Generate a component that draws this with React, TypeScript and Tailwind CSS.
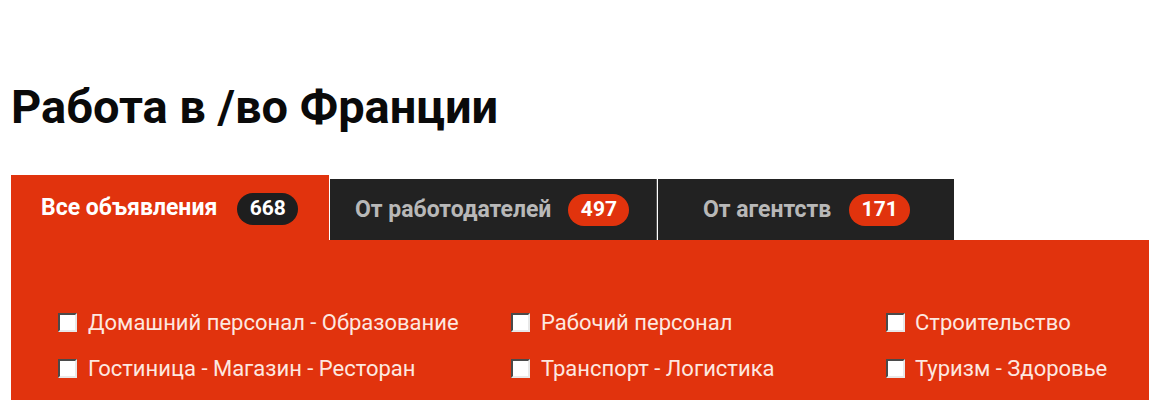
const tabs = [
  { label: "Все объявления", count: 668, active: true },
  { label: "От работодателей", count: 497, active: false },
  { label: "От агентств", count: 171, active: false },
];

const categories = [
  ["Домашний персонал - Образование", "Рабочий персонал", "Строительство"],
  ["Гостиница - Магазин - Ресторан", "Транспорт - Логистика", "Туризм - Здоровье"],
  ["Сельское хозяйство", "Офис - Администрация", "Другое"],
];

function Box() {
  return (
    <span className="inline-block h-[19px] w-[19px] shrink-0 border-2 border-t-[#4a4a4a] border-l-[#4a4a4a] border-r-[#e8e8e8] border-b-[#e8e8e8] bg-white" />
  );
}

export default function App() {
  return (
    <div className="h-[400px] w-[1170px] overflow-hidden bg-white pt-[81px] font-['Roboto',sans-serif]">
      <h1 className="pl-[11px] text-[47px] font-bold leading-[52px] text-[#0a0a0a]">Работа в /во Франции</h1>

      <div className="ml-[11px] mt-[42px] w-[1138px]">
        <div className="flex items-end">
          {tabs.map((tab, i) => (
            <div
              key={tab.label}
              className={
                tab.active
                  ? "flex h-[65px] w-[318px] items-center gap-[20px] bg-[#e1330d] pl-[30px] pt-[2px]"
                  : i === 1
                    ? "ml-[1px] flex h-[61px] w-[327px] items-center gap-[17px] border-r border-[#555] bg-[#222222] pl-[25px] pt-[1px]"
                    : "ml-[1px] flex h-[61px] w-[296px] items-center gap-[18px] bg-[#222222] pl-[45px] pt-[1px]"
              }
            >
              <span className={tab.active ? "text-[23px] font-bold text-white" : "text-[23px] font-bold text-[#b8b8b8]"}>{tab.label}</span>
              <span
                className={
                  tab.active
                    ? "flex h-[32px] w-[61px] items-center justify-center rounded-full bg-[#1e1e1e] text-[21px] font-bold text-white"
                    : "flex h-[32px] w-[61px] items-center justify-center rounded-full bg-[#e1330d] text-[21px] font-bold text-white"
                }
              >
                {tab.count}
              </span>
            </div>
          ))}
        </div>

        <div className="bg-[#e1330d] pt-[66px] pb-[20px]">
          {categories.map((row) => (
            <div key={row[0]} className="flex h-[46px] items-start">
              {row.map((item, j) => (
                <label
                  key={item}
                  className={
                    j === 0
                      ? "flex w-[500px] items-center gap-[11px] pl-[47px] text-[22px] text-[#fde8e0]"
                      : j === 1
                        ? "flex w-[375px] items-center gap-[11px] text-[22px] text-[#fde8e0]"
                        : "flex items-center gap-[10px] text-[22px] text-[#fde8e0]"
                  }
                >
                  <Box />
                  <span>{item}</span>
                </label>
              ))}
            </div>
          ))}
        </div>
      </div>
    </div>
  );
}
